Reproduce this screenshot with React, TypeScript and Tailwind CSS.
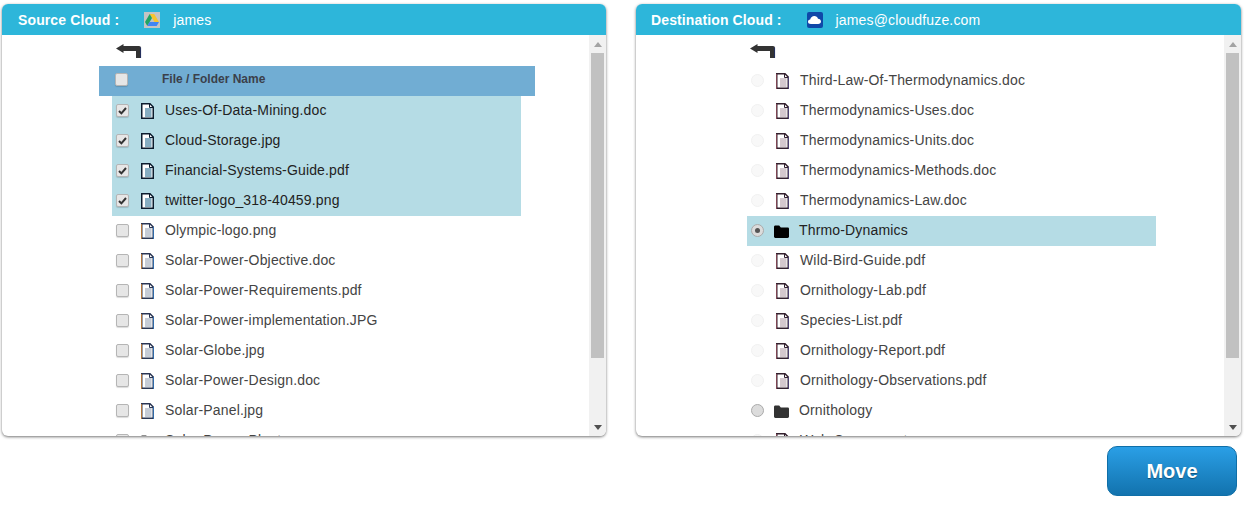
import React from 'react';

const font = "font-['Liberation_Sans',Arial,sans-serif]";

const sourceFiles = [
  { name: 'Uses-Of-Data-Mining.doc', selected: true },
  { name: 'Cloud-Storage.jpg', selected: true },
  { name: 'Financial-Systems-Guide.pdf', selected: true },
  { name: 'twitter-logo_318-40459.png', selected: true },
  { name: 'Olympic-logo.png' },
  { name: 'Solar-Power-Objective.doc' },
  { name: 'Solar-Power-Requirements.pdf' },
  { name: 'Solar-Power-implementation.JPG' },
  { name: 'Solar-Globe.jpg' },
  { name: 'Solar-Power-Design.doc' },
  { name: 'Solar-Panel.jpg' },
];

const destFiles = [
  'Third-Law-Of-Thermodynamics.doc',
  'Thermodynamics-Uses.doc',
  'Thermodynamics-Units.doc',
  'Thermodynamics-Methods.doc',
  'Thermodynamics-Law.doc',
];

const destFiles2 = [
  'Wild-Bird-Guide.pdf',
  'Ornithology-Lab.pdf',
  'Species-List.pdf',
  'Ornithology-Report.pdf',
  'Ornithology-Observations.pdf',
];

function FileIcon({ blue = false, pink = false }: { blue?: boolean; pink?: boolean }) {
  const fill = blue ? '#86aec2' : pink ? '#d4c8ce' : '#c6ccd6';
  const line = blue ? '#0c1c2e' : pink ? '#33202e' : '#2a3654';
  const left = blue ? '#0c1c2e' : pink ? '#7d4452' : '#b5763a';
  const right = blue ? '#0c1c2e' : pink ? '#4a3f70' : '#2f6aa8';
  return (
    <svg width="13" height="16" viewBox="0 0 13 16" className="shrink-0">
      <path d="M0.75 0.75H9L12.25 4V15.25H0.75Z" fill="#fff" stroke={line} strokeWidth="1.5" />
      <rect x="0" y="1" width="1" height="15" fill={left} />
      <rect x="12" y="4" width="1" height="12" fill={right} />
      <rect x="4" y="5" width="6.5" height="9" fill={fill} />
      <path d="M8.5 1V4.5H12" fill="none" stroke={line} strokeWidth="1" />
    </svg>
  );
}

function FolderIcon({ color = '#000' }: { color?: string }) {
  return (
    <svg width="15" height="13" viewBox="0 0 15 13" className="shrink-0">
      <path d="M0 2C0 1 .6 .5 1.4 .5H5.2L6.8 2.5H13.6C14.4 2.5 15 3 15 3.8V11.6C15 12.4 14.4 13 13.6 13H1.4C.6 13 0 12.4 0 11.6Z" fill={color} />
    </svg>
  );
}

function BackArrow() {
  return (
    <svg width="26" height="14" viewBox="0 0 26 14" className="block">
      <path d="M0 4.5L7.5 0V2H23Q25 2 25 4V14H20V7H7.5V9Z" fill="#333" />
      <path d="M24.6 3.5V14" stroke="#1f2f6b" strokeWidth="0.8" />
    </svg>
  );
}

function Checkbox({ checked = false }: { checked?: boolean }) {
  return (
    <span className="-mt-[1px] flex h-[13px] w-[13px] shrink-0 items-center justify-center rounded-[2px] border border-[#b5b5b5] bg-[#e6e6e6] shadow-[0_1px_1px_rgba(0,0,0,0.15)]">
      {checked && (
        <svg width="9" height="8" viewBox="0 0 9 8">
          <path d="M1 4L3.4 6.4L8 1" fill="none" stroke="#333" strokeWidth="2" />
        </svg>
      )}
    </span>
  );
}

function Radio({ state }: { state: 'disabled' | 'on' | 'off' }) {
  if (state === 'disabled') {
    return <span className="-mt-[1px] h-[13px] w-[13px] shrink-0 rounded-full border border-[#f0f0f0] bg-[#f8f8f8]" />;
  }
  return (
    <span className="-mt-[1px] flex h-[13px] w-[13px] shrink-0 items-center justify-center rounded-full border border-[#aaa] bg-[#dcdcdc]">
      {state === 'on' && <span className="h-[5px] w-[5px] rounded-full bg-[#555]" />}
    </span>
  );
}

function Scrollbar() {
  return (
    <div className="flex w-[17px] shrink-0 flex-col items-center bg-[#f1f1f1]">
      <div className="flex h-[18px] w-full items-center justify-center">
        <svg width="8" height="5" viewBox="0 0 8 5"><path d="M4 0L8 5H0Z" fill="#a3a3a3" /></svg>
      </div>
      <div className="h-[305px] w-[13px] bg-[#c1c1c1]" />
      <div className="flex-1" />
      <div className="flex h-[18px] w-full items-center justify-center">
        <svg width="8" height="5" viewBox="0 0 8 5"><path d="M0 0H8L4 5Z" fill="#505050" /></svg>
      </div>
    </div>
  );
}

function DriveIcon() {
  return (
    <span className="flex h-[16px] w-[16px] items-center justify-center bg-[#c4c4c4]">
      <svg width="14" height="12" viewBox="0 0 14 12">
        <path d="M4.7 0H9.2L14 8H9.5Z" fill="#f7c52c" />
        <path d="M4.7 0L7 4L2.3 12L0 8Z" fill="#1fa463" />
        <path d="M4.5 8H14L11.7 12H2.3Z" fill="#4185f4" />
      </svg>
    </span>
  );
}

function OneDriveIcon() {
  return (
    <span className="flex h-[16px] w-[16px] items-center justify-center rounded-[2px] bg-[#0f48a8]">
      <svg width="13" height="8" viewBox="0 0 13 8">
        <path d="M3 8C1.2 8 0 7 0 5.7C0 4.5 .9 3.6 2.2 3.5C2.7 1.5 4.3 0 6.3 0C8.1 0 9.5 1 10 2.7C11.7 2.8 13 4 13 5.5C13 7 11.8 8 10.2 8Z" fill="#fff" />
      </svg>
    </span>
  );
}

function Panel({ label, account, icon, iconGap, labelPad, width, children }: {
  label: string;
  account: string;
  icon: React.ReactNode;
  iconGap: string;
  labelPad: string;
  width: string;
  children: React.ReactNode;
}) {
  return (
    <div className={`${width} flex h-[432px] flex-col overflow-hidden rounded-[6px] bg-white shadow-[0_1px_3px_rgba(0,0,0,0.55)]`}>
      <div className={`flex h-[31px] shrink-0 items-center bg-[#2db6da] ${labelPad} text-white`}>
        <span className={`mt-[2px] text-[14px] font-bold tracking-[0.12px] ${iconGap}`}>{label}</span>
        {icon}
        <span className="ml-[13px] mt-[2px] text-[14px] tracking-[0.15px]">{account}</span>
      </div>
      <div className="flex min-h-0 flex-1">
        <div className="min-w-0 flex-1 overflow-hidden">{children}</div>
        <Scrollbar />
      </div>
    </div>
  );
}

function SourceList() {
  return (
    <div>
      <div className="flex h-[31px] items-center pl-[114px]"><BackArrow /></div>
      <div className="ml-[97px] flex h-[30px] w-[436px] items-center bg-[#71add3] pl-[16px] text-[12px] font-bold text-[#3b3f4a]">
        <span className="-mt-[3px]"><Checkbox /></span>
        <span className="ml-[34px] -mt-[4px]">File / Folder Name</span>
      </div>
      {sourceFiles.map((f) => (
        <div key={f.name} className={`ml-[110px] flex h-[30px] w-[409px] items-center pl-[4px] text-[14px] tracking-[0.16px] ${f.selected ? 'bg-[#b5dce5] text-[#222]' : 'text-[#444]'}`}>
          <Checkbox checked={f.selected} />
          <span className="ml-[12px]"><FileIcon blue={f.selected} /></span>
          <span className="ml-[11px] -mt-[2px]">{f.name}</span>
        </div>
      ))}
      <div className="ml-[110px] flex h-[30px] w-[409px] items-center pl-[4px] text-[14px] tracking-[0.16px] text-[#444]">
        <Checkbox />
        <span className="ml-[12px]"><FolderIcon color="#222" /></span>
        <span className="ml-[9px] -mt-[2px]">Solar-Power-Plant</span>
      </div>
    </div>
  );
}

function DestRow({ name, state = 'disabled', folder, selected }: {
  name: string;
  state?: 'disabled' | 'on' | 'off';
  folder?: string;
  selected?: boolean;
}) {
  return (
    <div className={`ml-[111px] flex h-[30px] w-[409px] items-center pl-[4px] text-[14px] tracking-[0.16px] ${selected ? 'bg-[#b5dce5] text-[#222]' : 'text-[#444]'}`}>
      <Radio state={state} />
      {folder ? (
        <>
          <span className="ml-[10px]"><FolderIcon color={folder} /></span>
          <span className="ml-[10px] -mt-[2px]">{name}</span>
        </>
      ) : (
        <>
          <span className="ml-[12px]"><FileIcon pink /></span>
          <span className="ml-[11px] -mt-[2px]">{name}</span>
        </>
      )}
    </div>
  );
}

function DestList() {
  return (
    <div>
      <div className="flex h-[31px] items-center pl-[114px]"><BackArrow /></div>
      {destFiles.map((name) => <DestRow key={name} name={name} />)}
      <DestRow name="Thrmo-Dynamics" state="on" folder="#000" selected />
      {destFiles2.map((name) => <DestRow key={name} name={name} />)}
      <DestRow name="Ornithology" state="off" folder="#333" />
      <DestRow name="Web-Components" />
    </div>
  );
}

export default function App() {
  return (
    <div className={`${font} h-[508px] w-[1249px] overflow-hidden bg-white pl-[2px] pt-[4px]`}>
      <div className="flex gap-[30px]">
        <Panel label="Source Cloud :" account="james" icon={<DriveIcon />} iconGap="mr-[25px]" labelPad="pl-[16px]" width="w-[604px]">
          <SourceList />
        </Panel>
        <Panel label="Destination Cloud :" account="james@cloudfuze.com" icon={<OneDriveIcon />} iconGap="mr-[25px]" labelPad="pl-[15px]" width="w-[605px]">
          <DestList />
        </Panel>
      </div>
      <div className="mt-[10px] flex justify-end pr-[12px]">
        <button className="h-[50px] w-[130px] rounded-[10px] border border-[#0f6fa8] bg-gradient-to-b from-[#2a9fe6] to-[#1273ae] text-[20px] font-bold text-white [text-shadow:0_1px_1px_rgba(0,0,0,0.4)]">
          Move
        </button>
      </div>
    </div>
  );
}
